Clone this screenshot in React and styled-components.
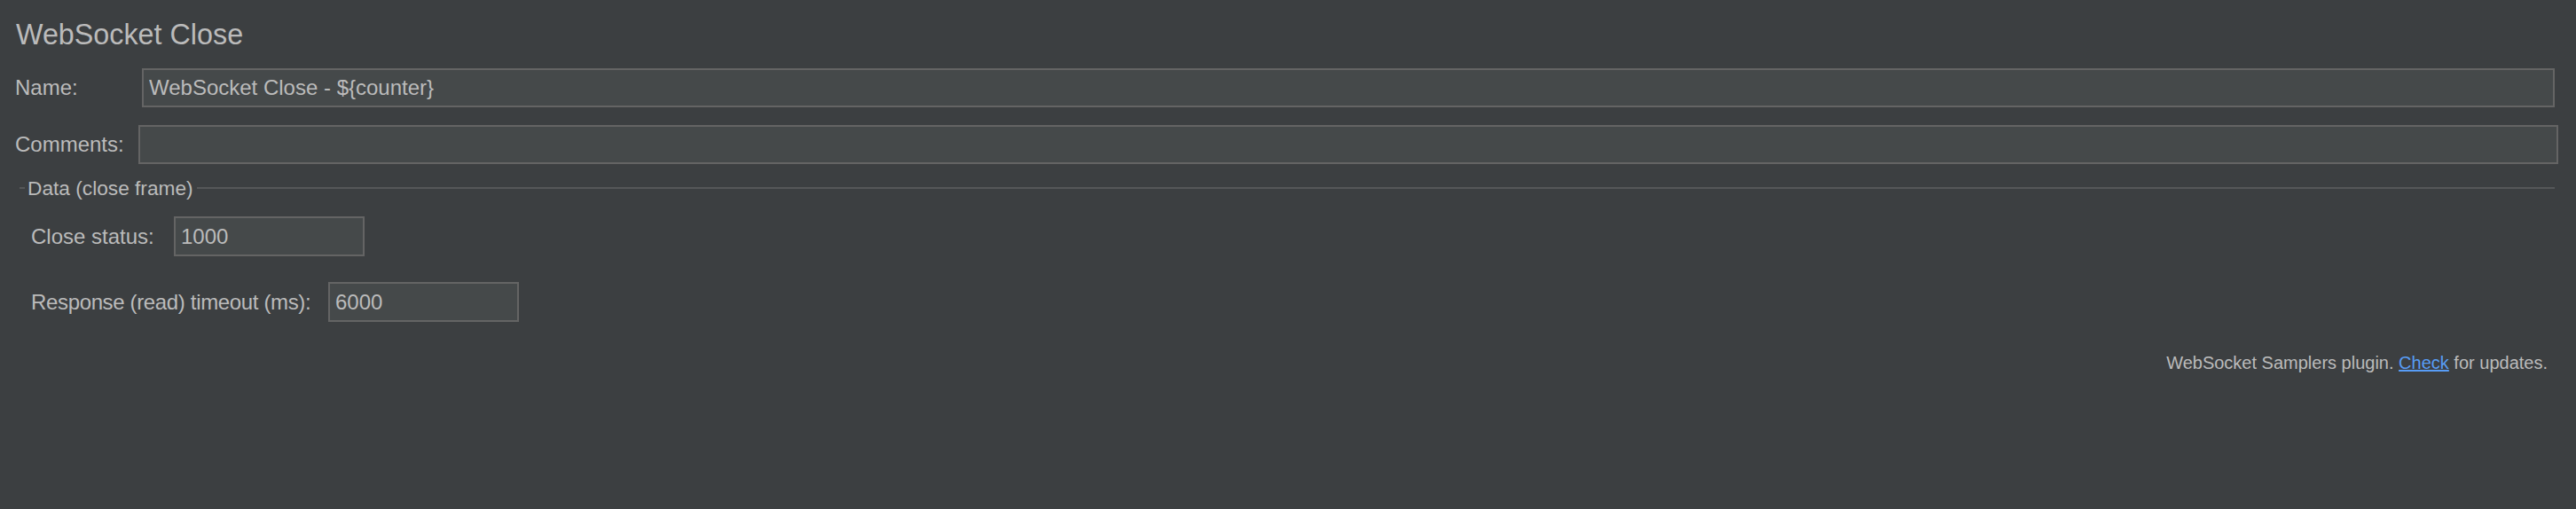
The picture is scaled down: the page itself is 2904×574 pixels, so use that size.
import React from "react";
import styled, { createGlobalStyle } from "styled-components";

const GlobalStyle = createGlobalStyle`
  html, body {
    margin: 0;
    padding: 0;
    background-color: #3c3f41;
  }
  body {
    font-family: "Liberation Sans", Arial, sans-serif;
    color: #bbbbbb;
  }
`;

const Page = styled.div`
  display: flex;
  flex-direction: column;
  height: 574px;
  box-sizing: border-box;
  padding: 21px 0 0 17px;
  background-color: #3c3f41;
`;

const Title = styled.h1`
  margin: 0 0 20px 1px;
  font-size: 32.3px;
  line-height: 36px;
  font-weight: normal;
  color: #bbbbbb;
`;

const Row = styled.div`
  display: flex;
  align-items: center;
  margin-right: ${(p) => p.$right || 0}px;
  margin-bottom: ${(p) => p.$bottom || 0}px;
`;

const Label = styled.label`
  flex: none;
  width: ${(p) => p.$width}px;
  font-size: 24px;
  line-height: 28px;
  letter-spacing: ${(p) => p.$tight ? "-0.35px" : "0"};
  white-space: nowrap;
`;

const TextField = styled.input`
  box-sizing: border-box;
  flex: ${(p) => (p.$width ? "none" : "1")};
  width: ${(p) => (p.$width ? `${p.$width}px` : "auto")};
  min-width: 0;
  height: ${(p) => p.$height || 44}px;
  margin: 0;
  padding: 0 6px;
  border: 2px solid #646464;
  border-radius: 0;
  outline: none;
  background-color: #45494a;
  color: #bbbbbb;
  font-family: "Liberation Sans", Arial, sans-serif;
  font-size: 24px;
`;

const Group = styled.section`
  display: flex;
  flex-direction: column;
  margin-top: 14px;
  margin-right: 24px;
`;

const GroupHeader = styled.div`
  display: flex;
  align-items: center;
  margin-left: 5px;
`;

const Rule = styled.div`
  flex: ${(p) => (p.$stub ? "none" : "1")};
  width: ${(p) => (p.$stub ? "6px" : "auto")};
  height: 2px;
  background-color: #555758;
`;

const Legend = styled.span`
  padding: 0 4px 0 3px;
  font-size: 22.7px;
  line-height: 26px;
  white-space: nowrap;
`;

const GroupBody = styled.div`
  display: flex;
  flex-direction: column;
  padding: 19px 0 0 18px;
`;

const Footer = styled.div`
  display: flex;
  justify-content: flex-end;
  margin: 34px 32px 0 0;
  font-size: 20px;
  line-height: 24px;
  color: #bbbbbb;
  white-space: pre;
`;

const Link = styled.a`
  color: #589df6;
  text-decoration: underline;
  cursor: pointer;
`;

export default function App() {
  return (
    <>
      <GlobalStyle />
      <Page>
        <Title>WebSocket Close</Title>
        <Row $right={24} $bottom={20}>
          <Label $width={143}>Name:</Label>
          <TextField defaultValue="WebSocket Close - ${counter}" />
        </Row>
        <Row $right={20}>
          <Label $width={139}>Comments:</Label>
          <TextField defaultValue="" />
        </Row>
        <Group>
          <GroupHeader>
            <Rule $stub />
            <Legend>Data (close frame)</Legend>
            <Rule />
          </GroupHeader>
          <GroupBody>
            <Row $bottom={29}>
              <Label $width={161}>Close status:</Label>
              <TextField $width={215} $height={45} defaultValue="1000" />
            </Row>
            <Row>
              <Label $width={335} $tight>Response (read) timeout (ms):</Label>
              <TextField $width={215} $height={45} defaultValue="6000" />
            </Row>
          </GroupBody>
        </Group>
        <Footer>
          WebSocket Samplers plugin. <Link>Check</Link> for updates.
        </Footer>
      </Page>
    </>
  );
}
